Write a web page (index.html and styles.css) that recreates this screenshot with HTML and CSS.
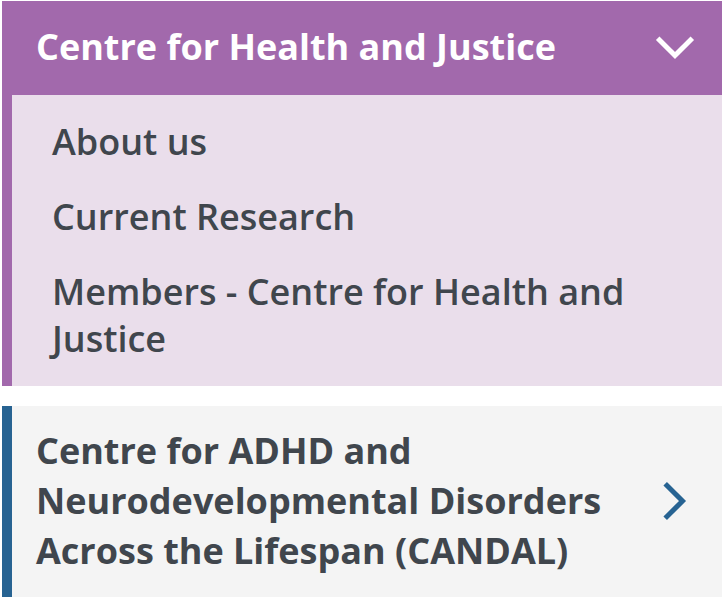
FILE: index.html
```html
<!DOCTYPE html>
<html lang="en">
<head>
<meta charset="utf-8">
<title>Research centres</title>
<link rel="stylesheet" href="styles.css">
</head>
<body>
<nav class="centres">
  <section class="group group-open">
    <button class="heading" type="button" aria-expanded="true">
      <span>Centre for Health and Justice</span>
      <svg class="chevron" viewBox="0 0 40 40" aria-hidden="true"><path d="M2.7 11.2 20 28.5 37.3 11.2"/></svg>
    </button>
    <ul class="links">
      <li><a href="#about">About us</a></li>
      <li><a href="#research">Current Research</a></li>
      <li><a href="#members">Members - Centre for Health and Justice</a></li>
    </ul>
  </section>
  <section class="group">
    <button class="heading" type="button" aria-expanded="false">
      <span>Centre for ADHD and Neurodevelopmental Disorders Across the Lifespan (CANDAL)</span>
      <svg class="chevron" viewBox="0 0 40 40" aria-hidden="true"><path d="M10.2 2.7 27.5 20 10.2 37.3"/></svg>
    </button>
  </section>
</nav>
</body>
</html>
```
FILE: styles.css
```css
* {
  box-sizing: border-box;
}

body {
  margin: 0;
  background: #fff;
  color: #40464d;
  font-family: "Open Sans", "Noto Sans", sans-serif;
}

.centres {
  display: flex;
  flex-direction: column;
  gap: 20px;
  padding: 1px 2px;
}

.group {
  border-left: 10px solid #276392;
  background: #f4f4f4;
}

.group-open {
  border-color: #a269ac;
  background: #eadeeb;
}

.heading {
  display: flex;
  width: 100%;
  align-items: center;
  justify-content: space-between;
  gap: 40px;
  padding: 20px 27px 21px 24px;
  border: 0;
  background: transparent;
  color: inherit;
  font: 700 36px/50px "Open Sans", "Noto Sans", sans-serif;
  text-align: left;
}

.group-open .heading {
  padding-top: 21px;
  padding-bottom: 23px;
  background: #a269ac;
  color: #fff;
}

.chevron {
  flex: none;
  width: 40px;
  height: 40px;
  fill: none;
  stroke: #276392;
  stroke-width: 5;
}

.group-open .chevron {
  stroke: #fff;
}

.links {
  display: flex;
  flex-direction: column;
  gap: 28px;
  margin: 0;
  padding: 23px 40px 24px;
  list-style: none;
  font-size: 36px;
  font-weight: 600;
  line-height: 47px;
}

.links a {
  color: inherit;
  text-decoration: none;
}
```
